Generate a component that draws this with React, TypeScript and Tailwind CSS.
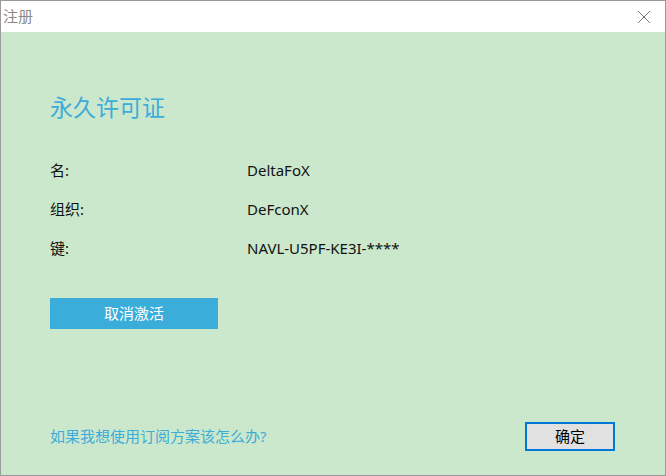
export default function App() {
  const rows = [
    { label: "名:", value: "DeltaFoX" },
    { label: "组织:", value: "DeFconX" },
    { label: "键:", value: "NAVL-U5PF-KE3I-****" },
  ];

  return (
    <div
      className="w-[666px] h-[476px] flex flex-col border border-[#9a9a9a] bg-[#cbe8cc] overflow-hidden"
      style={{ fontFamily: '"Noto Sans", "Noto Sans CJK SC", sans-serif' }}
    >
      {/* Title bar */}
      <div className="h-[31px] bg-white flex items-center justify-between pl-[2px] pr-[14px] shrink-0">
        <span className="text-[15px] text-[#8a8a8a]">注册</span>
        <svg width="14" height="14" viewBox="0 0 14 14" className="text-[#777]">
          <path d="M1 1L13 13M13 1L1 13" stroke="currentColor" strokeWidth="1" />
        </svg>
      </div>

      {/* Body */}
      <div className="flex-1 flex flex-col pl-[49px] pr-[50px] pt-[60px]">
        <h1 className="text-[23px] leading-[30px] text-[#3eacd9]">永久许可证</h1>

        <div className="mt-[38px] flex flex-col gap-[19px] text-[15px] text-[#111]">
          {rows.map((r) => (
            <div key={r.label} className="flex h-[20px] items-center">
              <span className="w-[197px]">{r.label}</span>
              <span>{r.value}</span>
            </div>
          ))}
        </div>

        <button className="mt-[40px] w-[168px] h-[31px] bg-[#3aaddb] text-white text-[15px]">
          取消激活
        </button>

        <div className="mt-auto mb-[24px] flex items-end justify-between">
          <a className="text-[15px] text-[#3eacd9] mb-[4px]">如果我想使用订阅方案该怎么办?</a>
          <button className="w-[90px] h-[29px] bg-[#e1e1e1] border-2 border-[#0078d7] text-[15px] text-black">
            确定
          </button>
        </div>
      </div>
    </div>
  );
}
